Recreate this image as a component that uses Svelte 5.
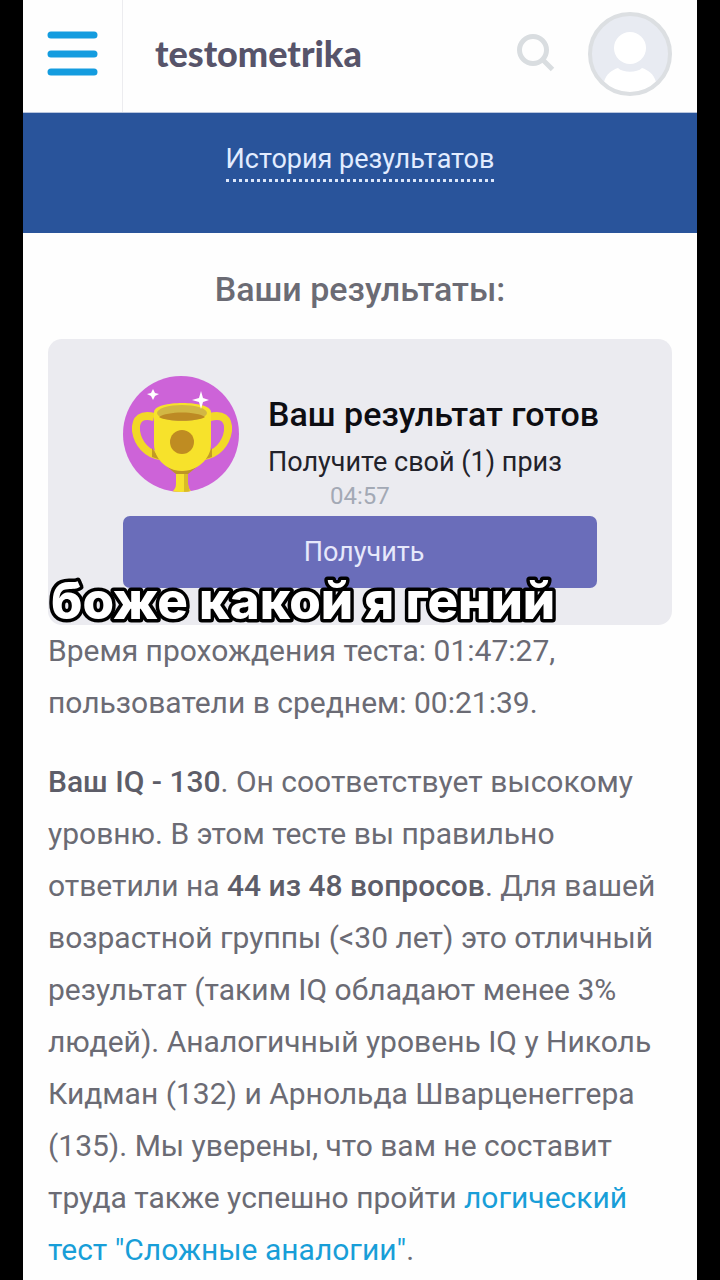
<script>
  const timer = "04:57";
  const caption = "боже какой я гений";
  let menuOpen = false;
</script>

<div class="page">
  <header>
    <button
      class="menu"
      aria-label="Меню"
      aria-expanded={menuOpen}
      on:click={() => (menuOpen = !menuOpen)}
    >
      <svg viewBox="0 0 52 46" width="52" height="46">
        <path
          d="M5 4h43M5 23h43M5 41h43"
          stroke="#149cdf"
          stroke-width="7"
          stroke-linecap="round"
        />
      </svg>
    </button>
    <a class="logo" href="/">testometrika</a>
    <button class="search" aria-label="Поиск">
      <svg viewBox="0 0 38 38" width="38" height="38" fill="none" stroke="#d9dde0">
        <circle cx="16" cy="16" r="13.5" stroke-width="5" />
        <path d="M25 25l10.500 10.500" stroke-width="5" />
      </svg>
    </button>
    <a class="avatar" href="/profile" aria-label="Профиль">
      <svg viewBox="0 0 84 84" width="84" height="84">
        <circle cx="42" cy="42" r="40" fill="#e8ebf2" />
        <path
          d="M16 70c2-8 8-12 14-14 5 5 19 5 24 0 6 2 12 6 14 14-7 7-16 11-26 11s-19-4-26-11z"
          fill="#fff"
        />
        <circle cx="42" cy="36" r="16" fill="#fff" />
        <circle cx="42" cy="42" r="40" fill="none" stroke="#dcdfe2" stroke-width="4" />
      </svg>
    </a>
  </header>

  <nav>
    <a href="/history">История результатов</a>
  </nav>

  <main>
    <h1>Ваши результаты:</h1>

    <section class="card">
      <div class="prize">
        <svg class="cup" viewBox="0 0 116 116" width="116" height="116">
          <defs>
            <clipPath id="disc"><circle cx="58" cy="58" r="58" /></clipPath>
          </defs>
          <g clip-path="url(#disc)">
            <rect width="116" height="116" fill="#cd63d8" />
            <path
              d="M31 41c-12-3-19 1-18 14 2 13 11 23 24 25M87 41c12-3 19 1 18 14-2 13-11 23-24 25"
              fill="none"
              stroke="#f2d927"
              stroke-width="8"
            />
            <path d="M29 72l9 12-9-3zM89 72l-9 12 9-3z" fill="#c39a25" />
            <path d="M53 90h12v18c0 4 2 6 4 8H49c2-2 4-4 4-8z" fill="#f6e22c" />
            <path d="M61 92h4v16l2 8h-6z" fill="#d9bb27" />
            <path d="M43 90c9 6 23 6 32 0l-10 8H53z" fill="#bd9526" />
            <path
              d="M31 36c0-12 57-12 57 0v32c0 16-15 27-29 27S31 84 31 68z"
              fill="#f7e22b"
            />
            <ellipse cx="59" cy="37" rx="25" ry="8" fill="#d2b744" />
            <path d="M36 41c8-6 38-6 46 0-8 5-38 5-46 0z" fill="#bd8a24" />
            <circle cx="59" cy="66" r="12" fill="#bf8c22" />
          </g>
          <path
            d="M78 15l2 7 6 2-6 2-2 7-2-7-7-2 7-2zM30 13l2 4 4 1-4 2-2 4-2-4-4-2 4-1z"
            fill="#fff"
          />
        </svg>
        <div class="prize-text">
          <h2>Ваш результат готов</h2>
          <p>Получите свой (1) приз</p>
          <time>{timer}</time>
        </div>
      </div>
      <button class="get">Получить</button>
      <svg class="caption" width="520" height="60">
        <text x="3" y="44">{caption}</text>
      </svg>
    </section>

    <p class="text">
      Время прохождения теста: 01:47:27, пользователи в среднем: 00:21:39.
    </p>
    <p class="text">
      <b>Ваш IQ - 130</b>. Он соответствует высокому уровню. В этом тесте вы
      правильно ответили на <b>44 из 48 вопросов</b>. Для вашей возрастной
      группы (&lt;30 лет) это отличный результат (таким IQ обладают менее 3%
      людей). Аналогичный уровень IQ у Николь Кидман (132) и Арнольда
      Шварценеггера (135). Мы уверены, что вам не составит труда также успешно
      пройти <a href="/logic">логический тест "Сложные аналогии"</a>.
    </p>
  </main>
</div>

<style>
  :global(body) {
    background: #000;
  }
  .page {
    margin: 0 23px;
    background: #fefefe;
    color: #6b6b74;
    font-family: Roboto, Arial, sans-serif;
  }
  button {
    border: 0;
    padding: 0;
    background: none;
    font-family: inherit;
    cursor: pointer;
  }
  svg {
    display: block;
  }
  header {
    display: flex;
    align-items: center;
    height: 112px;
    padding-right: 25px;
    border-bottom: 1px solid #b9c6de;
  }
  .menu {
    align-self: stretch;
    display: flex;
    align-items: center;
    padding: 0 24px 4px 23px;
    border-right: 1px solid #ececef;
  }
  .logo {
    margin-left: 32px;
    padding-bottom: 6px;
    color: #57546a;
    font-family: Lato, sans-serif;
    font-size: 36px;
    font-weight: 900;
    line-height: 40px;
    text-decoration: none;
  }
  .search {
    margin-left: auto;
    margin-right: 33px;
    padding-bottom: 6px;
  }
  .avatar {
    padding-bottom: 4px;
  }
  nav {
    display: flex;
    justify-content: center;
    height: 120px;
    background: #29549b;
  }
  nav a {
    align-self: flex-start;
    margin-top: 30px;
    padding-bottom: 4px;
    border-bottom: 3px dotted #dbe6fa;
    color: #e2ecff;
    font-size: 27px;
    line-height: 32px;
    text-decoration: none;
  }
  main {
    padding: 36px 25px 8px;
  }
  h1 {
    margin: 0 0 30px;
    font-size: 34px;
    font-weight: 500;
    line-height: 40px;
    text-align: center;
  }
  .card {
    position: relative;
    padding: 37px 75px;
    border-radius: 14px;
    background: #ebebf0;
  }
  .prize {
    display: flex;
    gap: 29px;
  }
  .cup {
    flex: none;
  }
  .prize-text {
    padding-top: 20px;
    white-space: nowrap;
  }
  h2 {
    margin: 0;
    color: #0d0d12;
    font-size: 34px;
    font-weight: 500;
    line-height: 36px;
  }
  .prize-text p {
    margin: 12px 0 0;
    color: #22222a;
    font-size: 27px;
    line-height: 36px;
  }
  time {
    display: block;
    padding-left: 62px;
    color: #a3a9b5;
    font-size: 24px;
    line-height: 32px;
  }
  .get {
    display: block;
    width: 100%;
    margin-top: 4px;
    padding-left: 8px;
    border-radius: 7px;
    background: #6a6dba;
    color: #e6e8fb;
    font-size: 27px;
    line-height: 72px;
  }
  .caption {
    position: absolute;
    left: 0;
    bottom: -10px;
    overflow: visible;
  }
  .caption text {
    fill: #fff;
    stroke: #000;
    stroke-width: 7px;
    stroke-linejoin: round;
    paint-order: stroke;
    font-family: Inter, sans-serif;
    font-size: 51px;
    font-weight: 800;
  }
  .text {
    margin: 0 0 27px;
    font-size: 30px;
    line-height: 52px;
  }
  b {
    font-weight: 500;
    color: #5d5d68;
  }
  .text a {
    color: #189ed8;
    text-decoration: none;
  }
</style>
